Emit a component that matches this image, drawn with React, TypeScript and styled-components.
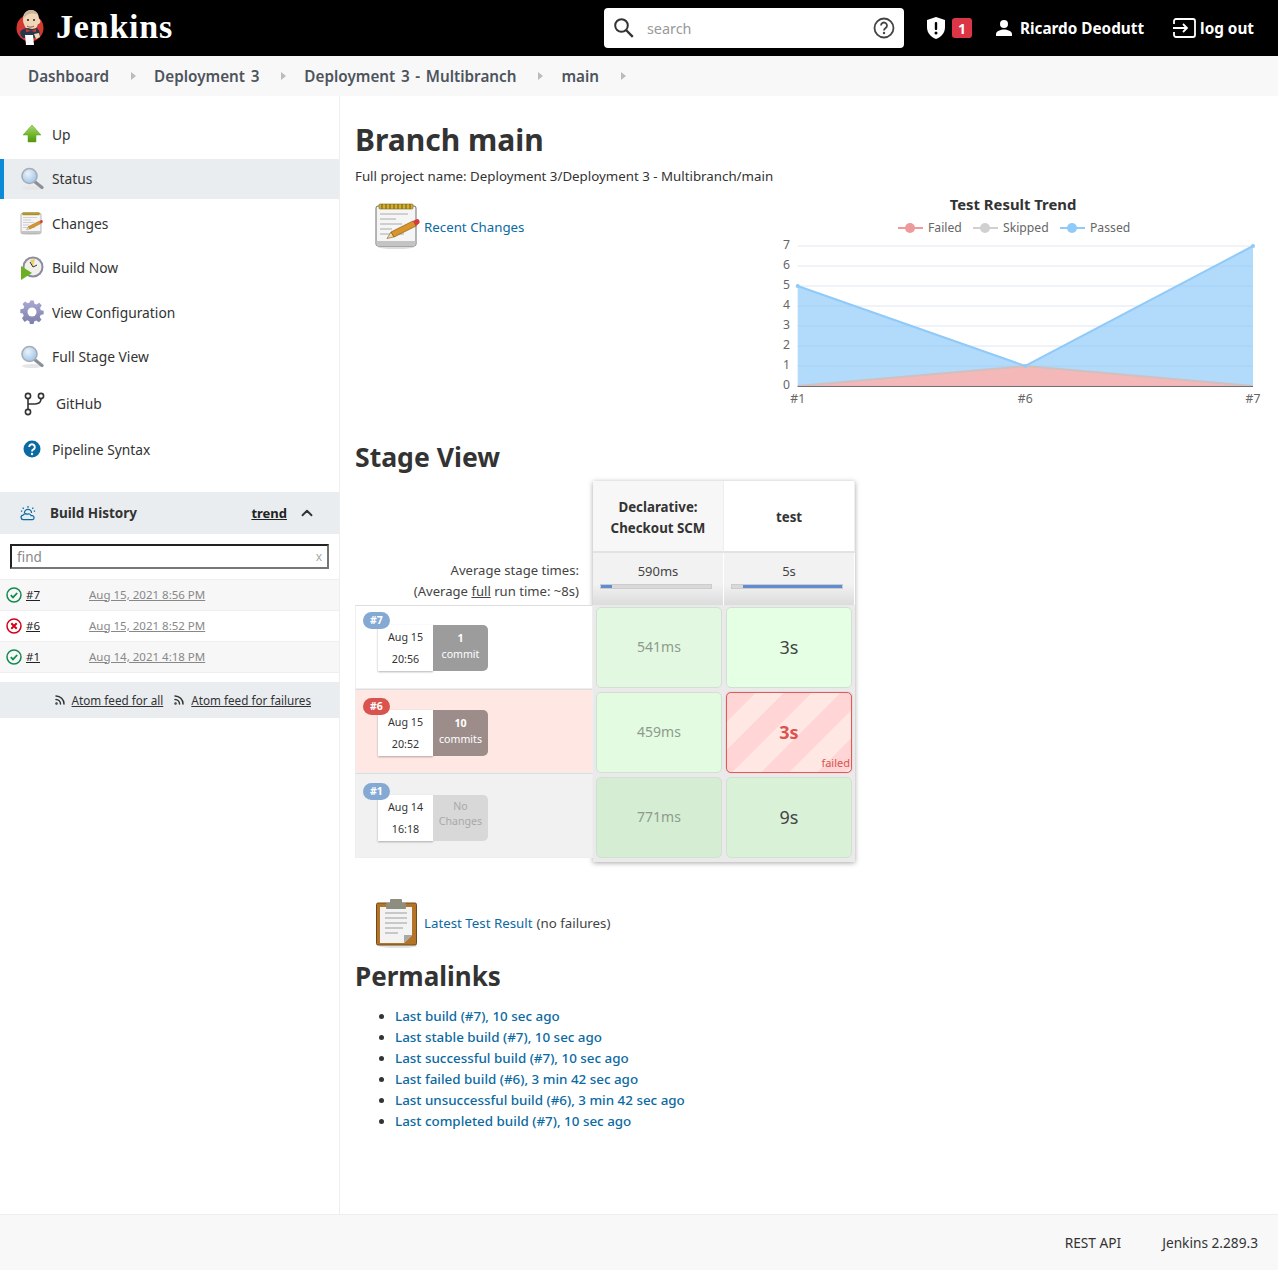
import React from 'react';
import styled, { createGlobalStyle } from 'styled-components';
import { ChevronUp, Rss } from 'lucide-react';

const GlobalStyle = createGlobalStyle`
  html, body { margin: 0; padding: 0; background: #fff; }
  body { font-family: "Noto Sans", "Open Sans", sans-serif; color: #333; }
  a { color: inherit; }
  * { box-sizing: border-box; }
`;

const Page = styled.div`
  width: 1278px;
  height: 1270px;
  display: flex;
  flex-direction: column;
  overflow: hidden;
`;

/* header */
const Header = styled.header`
  height: 56px;
  background: #000;
  color: #fff;
  display: flex;
  align-items: center;
  padding: 0 24px 0 15px;
  flex: none;
`;
const Brand = styled.div`
  display: flex;
  align-items: center;
  gap: 11px;
  font-family: "Liberation Serif", serif;
  font-weight: 700;
  font-size: 34px;
  letter-spacing: 0.8px;
  line-height: 36px;
  padding-bottom: 2px;
`;
const SearchBox = styled.div`
  margin-left: auto;
  width: 300px;
  height: 40px;
  background: #fff;
  border-radius: 4px;
  display: flex;
  align-items: center;
  padding: 0 9px 0 10px;
  color: #999;
  font-size: 14.4px;
`;
const SearchText = styled.span`
  margin-left: 13px;
  flex: 1;
`;
const Alert = styled.div`
  margin-left: 23px;
  display: flex;
  align-items: center;
  gap: 7px;
`;
const AlertCount = styled.span`
  width: 20px;
  height: 20px;
  background: #dc3545;
  border-radius: 3px;
  font-size: 14px;
  font-weight: 700;
  display: flex;
  align-items: center;
  justify-content: center;
`;
const HeadLink = styled.div<{ $gap: number; $left: number }>`
  margin-left: ${(p) => p.$left}px;
  display: flex;
  align-items: center;
  gap: ${(p) => p.$gap}px;
  font-size: 15.3px;
  font-weight: 700;
`;

/* breadcrumbs */
const Crumbs = styled.nav`
  height: 40px;
  background: #f8f8f8;
  display: flex;
  align-items: center;
  padding-left: 28px;
  flex: none;
`;
const Crumb = styled.span`
  font-size: 15.25px;
  font-weight: 600;
  word-spacing: 1.7px;
  color: #4d545d;
  display: flex;
  align-items: center;
  &::after {
    content: '';
    margin: 0 18px 0 22px;
    border-left: 5px solid #bbb;
    border-top: 4px solid transparent;
    border-bottom: 4px solid transparent;
  }
`;

/* body */
const Body = styled.div`
  flex: 1;
  display: flex;
  min-height: 0;
`;
const Sidebar = styled.aside`
  width: 340px;
  flex: none;
  border-right: 1px solid #eee;
  padding-top: 18px;
`;
const TaskRow = styled.div<{ $active?: boolean; $offset?: number }>`
  height: 40px;
  margin-top: ${(p) => p.$offset ?? 0}px;
  margin-bottom: 4.5px;
  display: flex;
  align-items: center;
  gap: 8px;
  font-size: 13.8px;
  color: #333;
  background: ${(p) => (p.$active ? '#e9edf0' : 'transparent')};
  border-left: ${(p) => (p.$active ? '4px solid #0b8ad8' : 'none')};
  padding-left: ${(p) => (p.$active ? 16 : 20)}px;
`;
const TaskIcon = styled.span<{ $wide?: boolean }>`
  width: ${(p) => (p.$wide ? 28 : 24)}px;
  height: 24px;
  display: flex;
  align-items: center;
  justify-content: center;
  flex: none;
`;

const HistoryPane = styled.section`
  margin-top: 23px;
`;
const HistoryHead = styled.div`
  height: 42px;
  background: #e9edf0;
  display: flex;
  align-items: center;
  padding: 0 23px 0 20px;
  font-size: 13.5px;
  font-weight: 700;
  gap: 12px;
`;
const HistoryTitle = styled.span`
  flex: 1;
  margin-left: 2px;
`;
const Trend = styled.a`
  font-size: 13px;
  text-decoration: underline;
  color: #222;
  margin-right: -1px;
`;
const FindWrap = styled.div`
  padding: 10px;
  height: 46px;
  border-bottom: 1px solid #eee;
`;
const FindBox = styled.div`
  height: 25px;
  border: 2px solid;
  border-color: #222 #777 #777 #222;
  display: flex;
  align-items: center;
  justify-content: space-between;
  padding: 0 5px;
  font-size: 13.5px;
  color: #888;
`;
const FindClear = styled.span`
  font-size: 12px;
  color: #aaa;
`;
const BuildRow = styled.div<{ $shade: boolean }>`
  height: 31px;
  display: flex;
  align-items: center;
  padding-left: 6px;
  border-bottom: 1px solid #eee;
  background: ${(p) => (p.$shade ? '#f7f7f7' : '#fff')};
  font-size: 11.5px;
`;
const BuildNo = styled.a`
  text-decoration: underline;
  color: #222;
  margin-left: 4px;
  width: 63px;
  margin-top: -2px;
`;
const BuildDate = styled.a`
  text-decoration: underline;
  color: #888;
  margin-top: -2px;
`;
const Feeds = styled.div`
  height: 36px;
  margin-top: 9px;
  background: #e9edf0;
  display: flex;
  align-items: center;
  justify-content: flex-end;
  padding-right: 28px;
  font-size: 11.7px;
  color: #333;
  gap: 10px;
`;
const Feed = styled.a`
  display: flex;
  align-items: center;
  gap: 6px;
  span { text-decoration: underline; }
`;

/* main */
const Main = styled.main`
  flex: 1;
  padding: 0 16px 0 15px;
  min-width: 0;
`;
const PageTitle = styled.h1`
  margin: 24px 0 0;
  font-size: 30px;
  line-height: 40px;
  font-weight: 700;
  color: #333;
`;
const ProjectName = styled.div`
  margin-top: 6px;
  font-size: 13.3px;
  line-height: 20px;
`;
const TopRow = styled.div`
  display: flex;
  justify-content: space-between;
  align-items: flex-start;
  margin-top: 4px;
`;
const DocLink = styled.div`
  display: flex;
  align-items: center;
  gap: 2px;
  padding-left: 19px;
  font-size: 13.3px;
  color: #333;
`;
const ChangesLink = styled(DocLink)`
  margin-top: 11px;
  a { margin-top: 4px; }
`;
const BlueLink = styled.a`
  color: #0b6aa2;
`;
const SectionTitle = styled.h2<{ $top: number; $size: number }>`
  margin: ${(p) => p.$top}px 0 0;
  font-size: ${(p) => p.$size}px;
  line-height: 36px;
  font-weight: 700;
  color: #333;
`;

/* stage view */
const StageWrap = styled.div`
  display: flex;
  margin-top: 6px;
`;
const StageLeft = styled.div`
  width: 238px;
  flex: none;
`;
const AvgLabel = styled.div`
  margin-top: 79px;
  height: 45px;
  padding-right: 14px;
  text-align: right;
  font-size: 13.1px;
  line-height: 21px;
  color: #444;
  u { text-decoration: underline; }
`;
const RunRow = styled.div<{ $bg: string; $height: number; $pad: number }>`
  position: relative;
  height: ${(p) => p.$height}px;
  background: ${(p) => p.$bg};
  border: 1px solid #eee;
  border-top: 1px solid #ddd;
  padding: ${(p) => p.$pad}px 0 0 22px;
  display: flex;
  align-items: flex-start;
`;
const RunBadge = styled.span<{ $color: string; $top: number }>`
  position: absolute;
  left: 7px;
  top: ${(p) => p.$top}px;
  padding: 0 7px;
  height: 17px;
  line-height: 17px;
  border-radius: 9px;
  background: ${(p) => p.$color};
  color: #fff;
  font-size: 10.5px;
  font-weight: 700;
  z-index: 1;
`;
const RunDate = styled.div`
  width: 55px;
  height: 46px;
  background: #fff;
  box-shadow: 0 1px 2px rgba(0, 0, 0, 0.3);
  text-align: center;
  font-size: 10.7px;
  line-height: 22px;
  color: #333;
  padding-top: 1px;
`;
const RunCommits = styled.div<{ $bg: string; $muted?: boolean }>`
  width: 55px;
  height: 46px;
  background: ${(p) => p.$bg};
  border-radius: 0 5px 5px 0;
  text-align: center;
  font-size: 10.6px;
  line-height: ${(p) => (p.$muted ? 15 : 16)}px;
  color: ${(p) => (p.$muted ? '#a8a8a8' : '#fff')};
  padding-top: ${(p) => (p.$muted ? 4 : 5)}px;
  b { font-weight: 700; }
`;
const StageGrid = styled.div`
  width: 262px;
  flex: none;
  display: grid;
  grid-template-columns: 131px 131px;
  grid-template-rows: 72px 52px 85px 85px 85px;
  box-shadow: 0 1px 5px rgba(0, 0, 0, 0.35);
  background: #eaeaea;
  height: 381px;
`;
const StageHead = styled.div<{ $bg: string }>`
  background: ${(p) => p.$bg};
  display: flex;
  align-items: center;
  justify-content: center;
  text-align: center;
  font-size: 13.3px;
  line-height: 21px;
  font-weight: 700;
  color: #333;
  padding-top: 3px;
  border-right: 1px solid #eee;
  border-bottom: 2px solid #e2e2e2;
`;
const AvgCell = styled.div`
  background: linear-gradient(#f2f2f2 60%, #dcdcdc);
  border-right: 1px solid #fff;
  text-align: center;
  font-size: 13px;
  line-height: 18px;
  padding: 9px 9px 0;
  color: #444;
`;
const AvgBar = styled.div`
  height: 5px;
  margin: 4px 2px 0 -2px;
  background: #d9d9d9;
  border: 1px solid #ccc;
  position: relative;
`;
const AvgFill = styled.div`
  position: absolute;
  top: 0;
  bottom: 0;
  background: #5f8dd3;
`;
const StageCell = styled.div<{ $bg: string; $tone: 'soft' | 'big' | 'fail' }>`
  position: relative;
  margin: 2px 2px 2px 3px;
  padding-bottom: 2px;
  border-radius: 5px;
  border: 1px solid ${(p) => (p.$tone === 'fail' ? '#e05a5a' : '#d3dfd2')};
  box-shadow: ${(p) => (p.$tone === 'fail' ? '0 0 1px #e05a5a' : 'none')};
  background: ${(p) => p.$bg};
  display: flex;
  align-items: center;
  justify-content: center;
  font-size: ${(p) => (p.$tone === 'soft' ? 14 : 18)}px;
  font-weight: ${(p) => (p.$tone === 'fail' ? 700 : 400)};
  color: ${(p) => (p.$tone === 'soft' ? '#8f9a8e' : p.$tone === 'fail' ? '#d9534f' : '#444')};
  &:nth-child(even) {
    margin: 2px 3px 2px 2px;
  }
`;
const FailedTag = styled.span`
  position: absolute;
  right: 1px;
  bottom: 2px;
  font-size: 11px;
  line-height: 14px;
  font-weight: 400;
  color: #d9534f;
`;

const TestRow = styled(DocLink)`
  margin-top: 36px;
`;
const NoFail = styled.span`
  margin-left: 2px;
  color: #444;
`;
const PermaList = styled.ul`
  margin: 12px 0 0;
  padding-left: 40px;
  font-size: 13.4px;
  font-weight: 500;
  line-height: 21px;
  color: #333;
`;

const Footer = styled.footer`
  height: 56px;
  flex: none;
  background: #f8f8f8;
  border-top: 1px solid #eee;
  display: flex;
  align-items: center;
  justify-content: flex-end;
  padding: 0 20px 0 0;
  gap: 41px;
  font-size: 13.7px;
  color: #333;
`;

/* drawn icons */
const JenkinsLogo = () => (
  <svg width="30" height="38" viewBox="0 0 30 38">
    <circle cx="15" cy="20" r="13.5" fill="#d33833" />
    <path d="M8 11c0-6 4-9 8-9s8 3 8 9c1 0 2 2 1 4-1 1-2 1-2 1-1 4-4 6-7 6s-6-2-7-6c-1-1-1-4-1-5z" fill="#f0d6b7" />
    <path d="M8 11c1-6 5-9 8-9 3 0 6 2 7 5-3-2-8-2-11 0-2 1-3 3-4 4z" fill="#c9b39a" />
    <circle cx="13" cy="12" r="1" fill="#222" />
    <circle cx="19" cy="12" r="1" fill="#222" />
    <path d="M12 18c2 1.500 5 1.500 7 0" stroke="#8a4b3a" fill="none" />
    <path d="M5 24c2-3 5-4 8-4l4 1 5-1c2 2 3 4 3 7l-2 3H8l-2-2z" fill="#28384a" />
    <path d="M11 21l5 2 5-2v3l-5-1-5 1z" fill="#d33833" />
    <path d="M10 27h8l1 10h-8z" fill="#fff" />
    <path d="M19 26l5-1 1 4-4 2z" fill="#f0d6b7" />
  </svg>
);

const SearchGlyph = () => (
  <svg width="20" height="20" viewBox="0 0 20 20" fill="none" stroke="#333" strokeWidth="2">
    <circle cx="7.500" cy="7.500" r="6.300" />
    <path d="M12 12l6.800 6.800" strokeWidth="2.400" />
  </svg>
);

const ShieldIcon = () => (
  <svg width="18" height="22" viewBox="0 0 18 22">
    <path d="M9 0l9 3v7c0 6-4 10-9 12C4 20 0 16 0 10V3z" fill="#fff" />
    <rect x="7.800" y="5" width="2.400" height="8" rx="1" fill="#000" />
    <circle cx="9" cy="16" r="1.500" fill="#000" />
  </svg>
);

const UserIcon = () => (
  <svg width="16" height="16" viewBox="0 0 16 16">
    <circle cx="8" cy="4" r="4" fill="#fff" />
    <path d="M0 16v-2c0-3 5-4.500 8-4.500s8 1.500 8 4.500v2z" fill="#fff" />
  </svg>
);

const LogoutIcon = () => (
  <svg width="23" height="20" viewBox="0 0 23 20" fill="none" stroke="#fff" strokeWidth="1.800">
    <path d="M1 6V3a2 2 0 0 1 2-2h17a2 2 0 0 1 2 2v14a2 2 0 0 1-2 2H3a2 2 0 0 1-2-2v-3" />
    <path d="M0 10h14M10 6l4 4-4 4" />
  </svg>
);

const HelpOutline = () => (
  <svg width="22" height="22" viewBox="0 0 22 22" fill="none">
    <circle cx="11" cy="11" r="9.500" stroke="#444" strokeWidth="1.800" />
    <path d="M8 8.500a3 3 0 1 1 4.500 2.600c-1 .6-1.500 1.200-1.500 2.400" stroke="#444" strokeWidth="1.800" />
    <circle cx="11" cy="16" r="1.200" fill="#444" />
  </svg>
);

const UpArrow = () => (
  <svg width="20" height="20" viewBox="0 0 20 20">
    <defs>
      <linearGradient id="upG" x1="0" y1="0" x2="0" y2="1">
        <stop offset="0" stopColor="#a5d96b" />
        <stop offset="1" stopColor="#4e9a06" />
      </linearGradient>
    </defs>
    <path d="M10 1l9 10h-5v7H6v-7H1z" fill="url(#upG)" stroke="#5c9e20" strokeWidth="0.500" />
  </svg>
);

const Magnifier = ({ id }: { id: string }) => (
  <svg width="24" height="24" viewBox="0 0 24 24">
    <defs>
      <radialGradient id={id} cx="0.4" cy="0.35" r="0.7">
        <stop offset="0" stopColor="#eaf3fb" />
        <stop offset="1" stopColor="#9cc3e6" />
      </radialGradient>
    </defs>
    <ellipse cx="12" cy="21" rx="10" ry="2" fill="#e6e6e6" />
    <path d="M14.500 14.500L22 20.500" stroke="#8a8f99" strokeWidth="3.200" strokeLinecap="round" />
    <circle cx="9.500" cy="9" r="7.500" fill={`url(#${id})`} stroke="#a7adb5" strokeWidth="1.600" />
  </svg>
);

const Notepad = ({ size }: { size: number }) => (
  <svg width={size} height={size} viewBox="0 0 48 48">
    <ellipse cx="22" cy="46" rx="18" ry="2" fill="#ddd" />
    <rect x="2" y="5" width="40" height="40" rx="2" fill="#f5f5f5" stroke="#6f6f6f" />
    <rect x="2.500" y="40" width="39" height="5" rx="1" fill="#c4c4c4" />
    <rect x="5" y="3" width="34" height="5" rx="1" fill="#d4ae2e" stroke="#7e6a1b" strokeWidth="0.600" />
    <path
      d="M8 3v5M12 3v5M16 3v5M20 3v5M24 3v5M28 3v5M32 3v5M36 3v5"
      stroke="#6a5814"
      strokeWidth="1"
    />
    <path d="M6 13h28M6 18h16M6 23h22M6 28h12M6 33h24" stroke="#aaa" strokeWidth="1" />
    <path d="M17 31l3 5-7 1.500z" fill="#efd9a8" stroke="#7d5a1e" strokeWidth="0.600" />
    <path d="M17 31l22-11 3 5-22 11z" fill="#d9952a" stroke="#8a5a14" strokeWidth="0.700" />
    <path d="M39 20l4-2c2-.5 3.500 3 2 4.500L42 25z" fill="#d83a3a" />
  </svg>
);

const BuildClock = () => (
  <svg width="24" height="24" viewBox="0 0 24 24">
    <circle cx="13" cy="11" r="10.500" fill="#8a8aa0" />
    <circle cx="13" cy="11" r="8.500" fill="#f1f1ea" />
    <path d="M13 11L10 4l5-1z" fill="#e8cf6a" />
    <path d="M13 11l4 -2M13 11l-3-5" stroke="#333" strokeWidth="1" />
    <path d="M1 10l11 7-11 7z" fill="#6ab023" />
  </svg>
);

const GearIcon = () => (
  <svg width="24" height="24" viewBox="0 0 24 24">
    <defs>
      <linearGradient id="gearG" x1="0" y1="0" x2="0" y2="1">
        <stop offset="0" stopColor="#a9a9d2" />
        <stop offset="1" stopColor="#7d7fa8" />
      </linearGradient>
    </defs>
    <path
      d="M10 0h4l.7 3.400 2.300 1 3-1.900 2.800 2.800-1.900 3 1 2.300 3.100.7v4l-3.400.7-1 2.300 1.900 3-2.800 2.800-3-1.900-2.300 1-.7 3.100h-4l-.7-3.400-2.300-1-3 1.900L.9 19.700l1.900-3-1-2.300L-1 13.700v-4l3.400-.7 1-2.300-1.900-3L4.300 1l3 1.900 2.300-1z"
      fill="url(#gearG)"
      transform="translate(1.200 .6) scale(.9)"
    />
    <circle cx="12" cy="12" r="4.500" fill="#fff" />
  </svg>
);

const BranchIcon = () => (
  <svg width="22" height="24" viewBox="0 0 22 24" fill="none" stroke="#333" strokeWidth="1.600">
    <circle cx="5" cy="4" r="2.600" />
    <circle cx="5" cy="20" r="2.600" />
    <circle cx="18" cy="4" r="2.600" />
    <path d="M5 6.600v10.800M18 6.600c0 4-3 5.400-6 5.400H5" />
  </svg>
);

const HelpFilled = () => (
  <svg width="18" height="18" viewBox="0 0 18 18">
    <circle cx="9" cy="9" r="8.500" fill="#0b6aa2" />
    <path d="M6.200 7a2.800 2.800 0 1 1 4.300 2.400c-1 .6-1.500 1-1.500 2" stroke="#fff" strokeWidth="1.900" fill="none" />
    <circle cx="9" cy="14" r="1.200" fill="#fff" />
  </svg>
);

const WeatherIcon = () => (
  <svg width="16" height="18" viewBox="0 0 18 18" fill="none" stroke="#0b6aa2" strokeWidth="1.400">
    <path d="M5 9a4 4 0 0 1 8 0" />
    <path d="M9 1v2M3 3l1.200 1.200M15 3l-1.200 1.200M1 7h1.500M15.500 7H17" />
    <path d="M4 16.500a2.500 2.500 0 0 1-.5-5c1-1.500 3-2 4.500-1 1.500-1 4-.5 4.500 1.500h1.500a2.300 2.300 0 0 1 0 4.500z" />
  </svg>
);

const StatusOk = () => (
  <svg width="16" height="16" viewBox="0 0 16 16" fill="none">
    <circle cx="8" cy="8" r="7" stroke="#138a4f" strokeWidth="1.500" />
    <path d="M4.800 8.200l2.200 2.200 4.200-4.400" stroke="#138a4f" strokeWidth="1.800" />
  </svg>
);

const StatusFail = () => (
  <svg width="16" height="16" viewBox="0 0 16 16" fill="none">
    <circle cx="8" cy="8" r="7" stroke="#d0021b" strokeWidth="1.500" />
    <path d="M5.300 5.300l5.400 5.400M10.700 5.300l-5.400 5.400" stroke="#d0021b" strokeWidth="2" />
  </svg>
);

const Clipboard = () => (
  <svg width="48" height="50" viewBox="0 0 48 50">
    <ellipse cx="24" cy="48" rx="19" ry="2" fill="#e2e2e2" />
    <rect x="2.500" y="5" width="40" height="42" rx="1.500" fill="#b3742a" stroke="#6f4a18" />
    <path d="M6 9h32v28l-8 8H6z" fill="#f3f3f3" />
    <path d="M30 45l8-8h-8z" fill="#a8a8a8" />
    <path d="M11 15h22M11 20h22M11 25h22M11 30h18M11 35h13" stroke="#bbb" strokeWidth="1.500" />
    <rect x="12" y="5" width="20" height="6" rx="1" fill="#8d8d80" />
    <rect x="16" y="1" width="12" height="5" rx="1" fill="#8d8d80" />
  </svg>
);

/* chart: x and y of the plot in svg units */
const chartX = (i: number) => [29.7, 257.3, 485][i];
const chartY = (v: number) => 196 - v * 20;
const linePoints = (vals: number[]) => vals.map((v, i) => `${chartX(i)},${chartY(v)}`).join(' ');

const ChartText = styled.text`
  font-family: "Noto Sans", sans-serif;
  font-size: 12.2px;
  fill: #666;
`;
const ChartTitle = styled.text`
  font-family: "Noto Sans", sans-serif;
  font-size: 14.85px;
  font-weight: 700;
  fill: #333;
`;

const legend = [
  { label: 'Failed', x: 142, color: '#ef9a9a' },
  { label: 'Skipped', x: 217, color: '#d0d0d0' },
  { label: 'Passed', x: 304, color: '#90caf9' },
];

const TrendChart = () => {
  const failed = [0, 1, 0];
  const passed = [5, 1, 7];
  return (
    <svg width="494" height="220" viewBox="0 0 494 220">
      <ChartTitle x="245" y="20" textAnchor="middle">Test Result Trend</ChartTitle>
      {legend.map((l) => (
        <g key={l.label}>
          <line x1={l.x - 12} x2={l.x + 13} y1="38" y2="38" stroke={l.color} strokeWidth="2" />
          <circle cx={l.x} cy="38" r="5" fill={l.color} />
          <ChartText x={l.x + 18} y="42">{l.label}</ChartText>
        </g>
      ))}
      {[0, 1, 2, 3, 4, 5, 6, 7].map((v) => (
        <g key={v}>
          <line x1={chartX(0)} x2={chartX(2)} y1={chartY(v)} y2={chartY(v)} stroke="#e0e6f1" />
          <ChartText x="22" y={chartY(v) + 3} textAnchor="end">{v}</ChartText>
        </g>
      ))}
      <polygon points={`${linePoints(failed)}`} fill="rgba(239,154,154,0.7)" />
      <polygon
        points={`${linePoints(passed)} ${chartX(2)},${chartY(0)} ${chartX(1)},${chartY(1)} ${chartX(0)},${chartY(0)}`}
        fill="rgba(144,202,249,0.7)"
      />
      <polyline points={linePoints(failed)} fill="none" stroke="#d0c0c0" strokeWidth="2" />
      <polyline points={linePoints(passed)} fill="none" stroke="#90caf9" strokeWidth="2" />
      {passed.map((v, i) => (
        <circle key={i} cx={chartX(i)} cy={chartY(v)} r="2" fill="#90caf9" />
      ))}
      <line x1={chartX(0)} x2={chartX(2)} y1="196.500" y2="196.500" stroke="#6e7079" />
      {['#1', '#6', '#7'].map((t, i) => (
        <ChartText key={t} x={chartX(i)} y="213" textAnchor="middle">{t}</ChartText>
      ))}
    </svg>
  );
};

// the margins of these rows collapse, so an offset only counts above the 4.5px row gap
const tasks = [
  { label: 'Up', icon: <UpArrow /> },
  { label: 'Status', icon: <Magnifier id="mag1" />, active: true },
  { label: 'Changes', icon: <Notepad size={24} /> },
  { label: 'Build Now', icon: <BuildClock /> },
  { label: 'View Configuration', icon: <GearIcon /> },
  { label: 'Full Stage View', icon: <Magnifier id="mag2" /> },
  { label: 'GitHub', icon: <BranchIcon />, wide: true, offset: 7 },
  { label: 'Pipeline Syntax', icon: <HelpFilled />, offset: 5.5 },
];

const builds = [
  { no: '#7', date: 'Aug 15, 2021 8:56 PM', ok: true },
  { no: '#6', date: 'Aug 15, 2021 8:52 PM', ok: false },
  { no: '#1', date: 'Aug 14, 2021 4:18 PM', ok: true },
];

const runs = [
  { no: '#7', day: 'Aug 15', time: '20:56', count: '1', noun: 'commit', bg: '#fff', badge: '#84a9d3', chip: '#9c9c9c', height: 84, pad: 19, badgeTop: 6 },
  { no: '#6', day: 'Aug 15', time: '20:52', count: '10', noun: 'commits', bg: '#ffe8e3', badge: '#d9534f', chip: '#9d8d8a', height: 84, pad: 20, badgeTop: 8 },
  { no: '#1', day: 'Aug 14', time: '16:18', bg: '#f1f1f1', badge: '#84a9d3', chip: '#d8d8d8', height: 85, pad: 21, badgeTop: 9 },
];

const permalinks = [
  'Last build (#7), 10 sec ago',
  'Last stable build (#7), 10 sec ago',
  'Last successful build (#7), 10 sec ago',
  'Last failed build (#6), 3 min 42 sec ago',
  'Last unsuccessful build (#6), 3 min 42 sec ago',
  'Last completed build (#7), 10 sec ago',
];

const failStripes =
  'repeating-linear-gradient(135deg, #ffd5d5 0 20px, #ffe8e3 20px 40px)';

export default function App() {
  return (
    <Page>
      <GlobalStyle />
      <Header>
        <Brand>
          <JenkinsLogo />
          Jenkins
        </Brand>
        <SearchBox>
          <SearchGlyph />
          <SearchText>search</SearchText>
          <HelpOutline />
        </SearchBox>
        <Alert>
          <ShieldIcon />
          <AlertCount>1</AlertCount>
        </Alert>
        <HeadLink $left={24} $gap={8}>
          <UserIcon />
          Ricardo Deodutt
        </HeadLink>
        <HeadLink $left={29} $gap={4}>
          <LogoutIcon />
          log out
        </HeadLink>
      </Header>
      <Crumbs>
        <Crumb>Dashboard</Crumb>
        <Crumb>Deployment 3</Crumb>
        <Crumb>Deployment 3 - Multibranch</Crumb>
        <Crumb>main</Crumb>
      </Crumbs>
      <Body>
        <Sidebar>
          {tasks.map((t) => (
            <TaskRow key={t.label} $active={t.active} $offset={t.offset}>
              <TaskIcon $wide={t.wide}>{t.icon}</TaskIcon>
              {t.label}
            </TaskRow>
          ))}
          <HistoryPane>
            <HistoryHead>
              <WeatherIcon />
              <HistoryTitle>Build History</HistoryTitle>
              <Trend>trend</Trend>
              <ChevronUp size={18} strokeWidth={2.5} />
            </HistoryHead>
            <FindWrap>
              <FindBox>
                find
                <FindClear>x</FindClear>
              </FindBox>
            </FindWrap>
            {builds.map((b, i) => (
              <BuildRow key={b.no} $shade={i % 2 === 0}>
                {b.ok ? <StatusOk /> : <StatusFail />}
                <BuildNo>{b.no}</BuildNo>
                <BuildDate>{b.date}</BuildDate>
              </BuildRow>
            ))}
            <Feeds>
              <Feed>
                <Rss size={12} strokeWidth={3} />
                <span>Atom feed for all</span>
              </Feed>
              <Feed>
                <Rss size={12} strokeWidth={3} />
                <span>Atom feed for failures</span>
              </Feed>
            </Feeds>
          </HistoryPane>
        </Sidebar>
        <Main>
          <PageTitle>Branch main</PageTitle>
          <ProjectName>Full project name: Deployment 3/Deployment 3 - Multibranch/main</ProjectName>
          <TopRow>
            <ChangesLink>
              <Notepad size={48} />
              <BlueLink>Recent Changes</BlueLink>
            </ChangesLink>
            <TrendChart />
          </TopRow>
          <SectionTitle $top={29} $size={26.6}>Stage View</SectionTitle>
          <StageWrap>
            <StageLeft>
              <AvgLabel>
                Average stage times:
                <br />
                (Average <u>full</u> run time: ~8s)
              </AvgLabel>
              {runs.map((r) => (
                <RunRow key={r.no} $bg={r.bg} $height={r.height} $pad={r.pad}>
                  <RunBadge $color={r.badge} $top={r.badgeTop}>{r.no}</RunBadge>
                  <RunDate>
                    {r.day}
                    <br />
                    {r.time}
                  </RunDate>
                  {r.count ? (
                    <RunCommits $bg={r.chip}>
                      <b>{r.count}</b>
                      <br />
                      {r.noun}
                    </RunCommits>
                  ) : (
                    <RunCommits $bg={r.chip} $muted>
                      No
                      <br />
                      Changes
                    </RunCommits>
                  )}
                </RunRow>
              ))}
            </StageLeft>
            <StageGrid>
              <StageHead $bg="#f7f7f7">
                Declarative:
                <br />
                Checkout SCM
              </StageHead>
              <StageHead $bg="#fff">test</StageHead>
              <AvgCell>
                590ms
                <AvgBar>
                  <AvgFill style={{ left: 0, width: '10%' }} />
                </AvgBar>
              </AvgCell>
              <AvgCell>
                5s
                <AvgBar>
                  <AvgFill style={{ left: '10%', right: 0 }} />
                </AvgBar>
              </AvgCell>
              <StageCell $bg="#e3f8e0" $tone="soft">541ms</StageCell>
              <StageCell $bg="#e5ffe5" $tone="big">3s</StageCell>
              <StageCell $bg="#e3fbe0" $tone="soft">459ms</StageCell>
              <StageCell $bg={failStripes} $tone="fail">
                3s
                <FailedTag>failed</FailedTag>
              </StageCell>
              <StageCell $bg="#d5edd2" $tone="soft">771ms</StageCell>
              <StageCell $bg="#d9f1d7" $tone="big">9s</StageCell>
            </StageGrid>
          </StageWrap>
          <TestRow>
            <Clipboard />
            <BlueLink>Latest Test Result</BlueLink>
            <NoFail>(no failures)</NoFail>
          </TestRow>
          <SectionTitle $top={10} $size={26}>Permalinks</SectionTitle>
          <PermaList>
            {permalinks.map((p) => (
              <li key={p}>
                <BlueLink>{p}</BlueLink>
              </li>
            ))}
          </PermaList>
        </Main>
      </Body>
      <Footer>
        <span>REST API</span>
        <span>Jenkins 2.289.3</span>
      </Footer>
    </Page>
  );
}
